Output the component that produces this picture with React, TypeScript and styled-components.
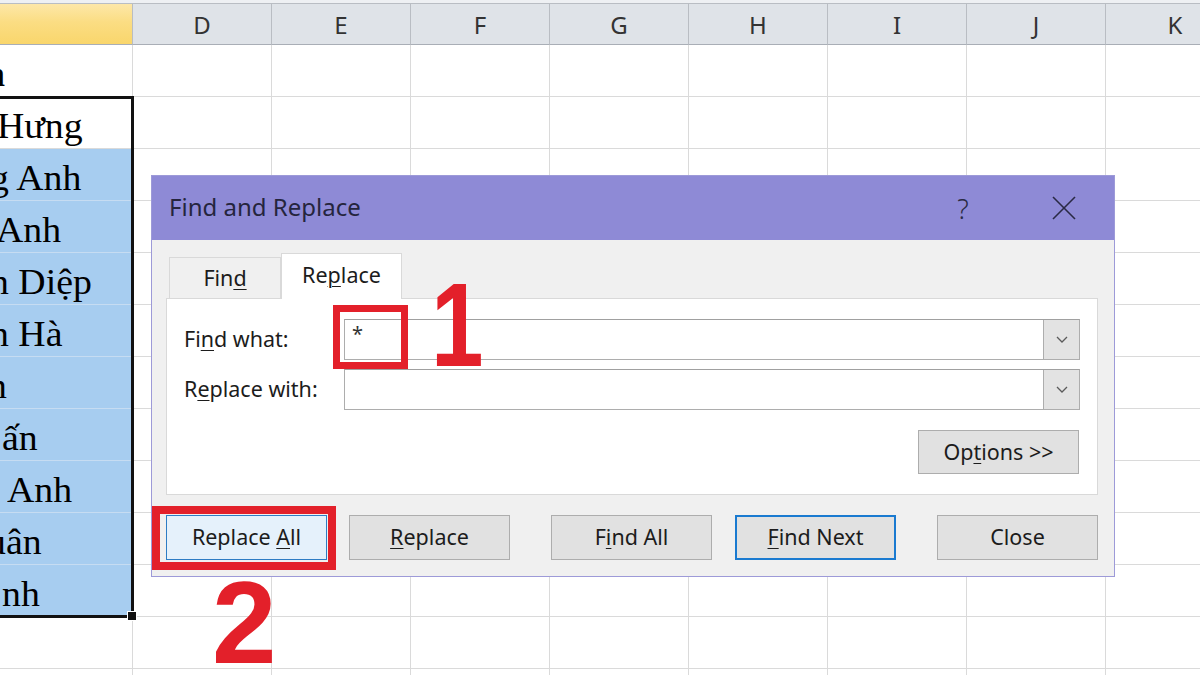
import React from "react";
import styled, { createGlobalStyle } from "styled-components";

const GlobalStyle = createGlobalStyle`
  html, body { margin: 0; padding: 0; background: #fff; }
  body { width: 1200px; height: 675px; overflow: hidden; }
  #root { width: 1200px; height: 675px; }
`;

const Page = styled.div`
  position: relative;
  width: 1200px;
  height: 675px;
  overflow: hidden;
  box-sizing: border-box;
  padding-top: 3px;
  background: linear-gradient(#eef0f3 0 3px, #fff 3px);
`;

const Sheet = styled.div`
  display: grid;
  grid-template-columns: 133px repeat(8, 139px);
  grid-template-rows: 42px;
  grid-auto-rows: 52px;
  width: 1245px;
`;

const HeaderCell = styled.div<{ $selected?: boolean }>`
  box-sizing: border-box;
  border-top: 1px solid #b9bdc3;
  border-right: 1px solid #b9bdc3;
  border-bottom: 1px solid #a9aeb6;
  background: ${(p) =>
    p.$selected
      ? "linear-gradient(#fde7a8, #fbdd83 45%, #f9d66c)"
      : "#dfe3e8"};
  display: flex;
  align-items: center;
  justify-content: center;
  font-family: "Noto Sans", "Open Sans", sans-serif;
  font-size: 24px;
  color: #333;
`;

const Cell = styled.div<{ $blue?: boolean }>`
  box-sizing: border-box;
  border-right: 1px solid #dadada;
  border-bottom: 1px solid ${(p) => (p.$blue ? "#c6dcf2" : "#dadada")};
  background: ${(p) => (p.$blue ? "#a7cdf0" : "#fff")};
`;

const NameCell = styled(Cell)<{ $bold?: boolean }>`
  overflow: hidden;
  white-space: nowrap;
  font-family: "Liberation Serif", "Times New Roman", serif;
  font-size: 35px;
  line-height: 43px;
  padding-top: 8px;
  font-weight: ${(p) => (p.$bold ? 700 : 400)};
  color: #000;
`;

const NameText = styled.span<{ $shift: number }>`
  display: inline-block;
  margin-left: ${(p) => p.$shift}px;
  transform: scaleX(1.08);
  transform-origin: left center;
`;

const Selection = styled.div`
  position: absolute;
  left: -5px;
  top: 96px;
  width: 139px;
  height: 522px;
  box-sizing: border-box;
  border: 3px solid #111;
  pointer-events: none;
`;

const FillHandle = styled.div`
  position: absolute;
  right: -6px;
  bottom: -6px;
  width: 8px;
  height: 8px;
  background: #111;
  border: 1px solid #fff;
`;

/* ---------- Dialog ---------- */

const Dialog = styled.div`
  position: absolute;
  left: 151px;
  top: 175px;
  width: 964px;
  box-sizing: border-box;
  border: 1px solid #9d9ad8;
  background: #f0f0f0;
  font-family: "Noto Sans", "Open Sans", sans-serif;
  color: #1c1c1c;
`;

const TitleBar = styled.div`
  height: 64px;
  background: #8e8ad6;
  display: flex;
  align-items: center;
  padding-left: 17px;
`;

const Title = styled.div`
  flex: 1;
  font-size: 24px;
  color: #25253d;
  padding-bottom: 3px;
`;

const TitleButton = styled.div<{ $w: number }>`
  width: ${(p) => p.$w}px;
  height: 40px;
  display: flex;
  align-items: center;
  justify-content: center;
  font-size: 27px;
  font-weight: 300;
  color: #2a2a44;
`;

const TitleControls = styled.div`
  display: flex;
  align-items: center;
  gap: 55px;
  padding-right: 27px;
`;

const Body = styled.div`
  padding: 13px 16px 16px 14px;
`;

const Tabs = styled.div`
  display: flex;
  align-items: flex-end;
  height: 45px;
  padding-left: 3px;
  position: relative;
  z-index: 1;
`;

const Tab = styled.div<{ $active?: boolean; $w: number }>`
  box-sizing: border-box;
  width: ${(p) => p.$w}px;
  height: ${(p) => (p.$active ? 46 : 41)}px;
  margin-bottom: ${(p) => (p.$active ? -1 : 0)}px;
  border: 1px solid #d9d9d9;
  border-bottom: none;
  background: ${(p) => (p.$active ? "#fff" : "#f0f0f0")};
  display: flex;
  align-items: center;
  justify-content: center;
  font-size: 21.5px;
  padding-bottom: ${(p) => (p.$active ? 4 : 2)}px;
`;

const Panel = styled.div`
  background: #fff;
  border: 1px solid #d9d9d9;
  padding: 20px 17px 20px 17px;
`;

const FieldRow = styled.div`
  display: grid;
  grid-template-columns: 160px 1fr;
  align-items: center;
  height: 41px;
  & + & {
    margin-top: 9px;
  }
`;

const Label = styled.div`
  font-size: 21.5px;
  padding-bottom: 2px;
`;

const Combo = styled.div`
  box-sizing: border-box;
  height: 41px;
  border: 1px solid #adadad;
  border-top-color: #a0a0a0;
  background: #fff;
  display: flex;
  align-items: stretch;
`;

const ComboValue = styled.div`
  flex: 1;
  padding-left: 7px;
  font-size: 20px;
  line-height: 28px;
  color: #333;
`;

const DropButton = styled.div`
  width: 36px;
  box-sizing: border-box;
  border-left: 1px solid #adadad;
  background: #e3e3e3;
  display: flex;
  align-items: center;
  justify-content: center;
`;

const OptionsRow = styled.div`
  display: flex;
  justify-content: flex-end;
  margin-top: 20px;
  padding-right: 1px;
`;

const Button = styled.div<{ $variant?: "hot" | "default"; $h?: number }>`
  box-sizing: border-box;
  width: 161px;
  height: ${(p) => p.$h ?? 45}px;
  display: flex;
  align-items: center;
  justify-content: center;
  font-size: 21.5px;
  padding-bottom: 2px;
  color: #1c1c1c;
  background: ${(p) => (p.$variant === "hot" ? "#e5f1fb" : "#e1e1e1")};
  border: ${(p) =>
    p.$variant === "hot"
      ? "1px solid #2d7cc4"
      : p.$variant === "default"
      ? "2px solid #1a7ad0"
      : "1px solid #adadad"};
`;

const ButtonRow = styled.div`
  margin-top: 20px;
  display: flex;
  justify-content: space-between;
`;

const ButtonGroup = styled.div<{ $gap: number }>`
  display: flex;
  gap: ${(p) => p.$gap}px;
`;

const Key = styled.u`
  text-decoration-thickness: 1px;
  text-underline-offset: 3px;
`;

/* ---------- Annotations ---------- */

const RedFrame = styled.div<{ $x: number; $y: number; $w: number; $h: number; $t: number }>`
  position: absolute;
  left: ${(p) => p.$x}px;
  top: ${(p) => p.$y}px;
  width: ${(p) => p.$w}px;
  height: ${(p) => p.$h}px;
  box-sizing: border-box;
  border: ${(p) => p.$t}px solid #e3202a;
  pointer-events: none;
`;

const Numeral = styled.div<{ $x: number; $y: number; $size: number; $sx?: number }>`
  position: absolute;
  left: ${(p) => p.$x}px;
  top: ${(p) => p.$y}px;
  font-family: "Liberation Sans", Arial, sans-serif;
  font-weight: 700;
  font-size: ${(p) => p.$size}px;
  line-height: 1;
  color: #e3202a;
  transform: scaleX(${(p) => p.$sx ?? 1});
  transform-origin: left top;
`;

const Chevron = () => (
  <svg width="12" height="8" viewBox="0 0 12 8">
    <polyline points="1,1 6,6 11,1" fill="none" stroke="#5a5a5a" strokeWidth="1.3" />
  </svg>
);

const CloseIcon = () => (
  <svg width="24" height="24" viewBox="0 0 24 24">
    <line x1="1" y1="1" x2="23" y2="23" stroke="#2a2a44" strokeWidth="1.6" />
    <line x1="23" y1="1" x2="1" y2="23" stroke="#2a2a44" strokeWidth="1.6" />
  </svg>
);

const columns = ["", "D", "E", "F", "G", "H", "I", "J", "K"];

type NameRow = { text: string; shift: number; blue?: boolean; bold?: boolean };

const names: NameRow[] = [
  { text: "n", shift: -16, bold: true },
  { text: "Hưng", shift: -3 },
  { text: "g Anh", shift: -10, blue: true },
  { text: "Anh", shift: -4, blue: true },
  { text: "n Diệp", shift: -10, blue: true },
  { text: "n Hà", shift: -10, blue: true },
  { text: "n", shift: -12, blue: true },
  { text: "ấn", shift: 2, blue: true },
  { text: "Anh", shift: 7, blue: true },
  { text: "uân", shift: -13, blue: true },
  { text: "nh", shift: 2, blue: true },
  { text: "", shift: 0 },
  { text: "", shift: 0 },
];

export default function App() {
  return (
    <>
      <GlobalStyle />
      <Page>
        <Sheet>
          {columns.map((c, i) => (
            <HeaderCell key={"h" + i} $selected={i === 0}>
              {c}
            </HeaderCell>
          ))}
          {names.map((row, r) => (
            <React.Fragment key={"r" + r}>
              <NameCell $blue={row.blue} $bold={row.bold}>
                <NameText $shift={row.shift}>{row.text}</NameText>
              </NameCell>
              {columns.slice(1).map((c) => (
                <Cell key={c + r} />
              ))}
            </React.Fragment>
          ))}
        </Sheet>

        <Selection>
          <FillHandle />
        </Selection>

        <Dialog>
          <TitleBar>
            <Title>Find and Replace</Title>
            <TitleControls>
              <TitleButton $w={46}>?</TitleButton>
              <TitleButton $w={46}>
                <CloseIcon />
              </TitleButton>
            </TitleControls>
          </TitleBar>
          <Body>
            <Tabs>
              <Tab $w={112}>
                Fin<Key>d</Key>
              </Tab>
              <Tab $w={121} $active>
                Re<Key>p</Key>lace
              </Tab>
            </Tabs>
            <Panel>
              <FieldRow>
                <Label>
                  Fi<Key>n</Key>d what:
                </Label>
                <Combo>
                  <ComboValue>*</ComboValue>
                  <DropButton>
                    <Chevron />
                  </DropButton>
                </Combo>
              </FieldRow>
              <FieldRow>
                <Label>
                  R<Key>e</Key>place with:
                </Label>
                <Combo>
                  <ComboValue />
                  <DropButton>
                    <Chevron />
                  </DropButton>
                </Combo>
              </FieldRow>
              <OptionsRow>
                <Button $h={44}>
                  Op<Key>t</Key>ions &gt;&gt;
                </Button>
              </OptionsRow>
            </Panel>
            <ButtonRow>
              <ButtonGroup $gap={22}>
                <Button $variant="hot">
                  Replace&nbsp;<Key>A</Key>ll
                </Button>
                <Button>
                  <Key>R</Key>eplace
                </Button>
              </ButtonGroup>
              <ButtonGroup $gap={23}>
                <Button>
                  F<Key>i</Key>nd All
                </Button>
                <Button $variant="default">
                  <Key>F</Key>ind Next
                </Button>
              </ButtonGroup>
              <Button>Close</Button>
            </ButtonRow>
          </Body>
        </Dialog>

        <RedFrame $x={333} $y={305} $w={75} $h={64} $t={7} />
        <RedFrame $x={152} $y={506} $w={184} $h={64} $t={8} />
        <Numeral $x={431} $y={266} $size={118} $sx={0.8}>1</Numeral>
        <Numeral $x={212} $y={565} $size={116}>2</Numeral>
      </Page>
    </>
  );
}
